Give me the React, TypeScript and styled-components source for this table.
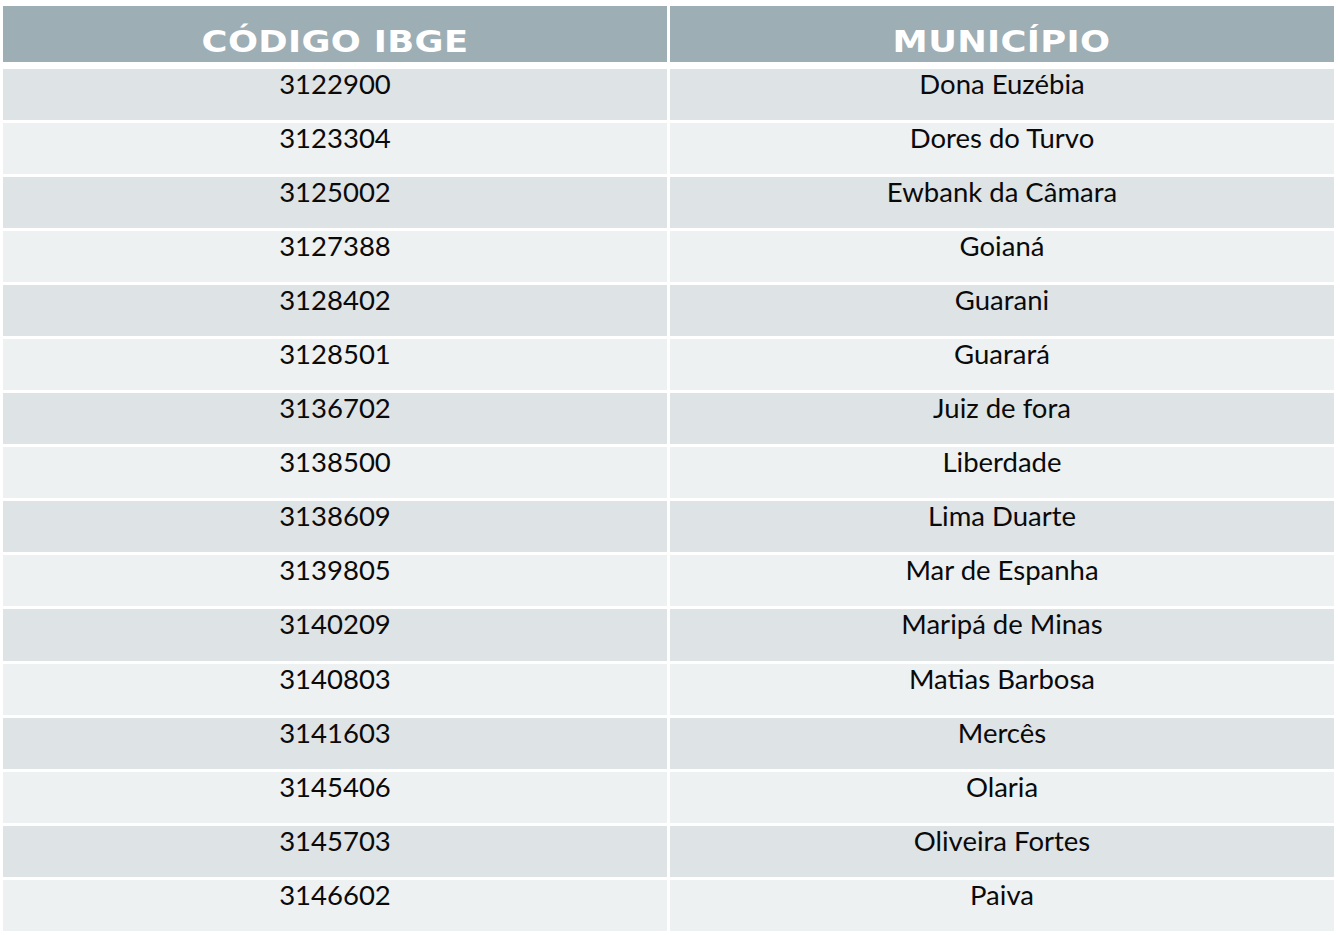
import React from "react";
import styled, { createGlobalStyle } from "styled-components";

const GlobalStyle = createGlobalStyle`
  html, body {
    margin: 0;
    padding: 0;
    background: #ffffff;
  }
  body {
    font-family: Lato, "Open Sans", "Liberation Sans", sans-serif;
  }
`;

const Page = styled.div`
  padding: 6px 0 0 3px;
  width: 1331px;
`;

const Table = styled.div`
  display: flex;
  flex-direction: column;
`;

const HeaderRow = styled.div`
  display: grid;
  grid-template-columns: 1fr 1fr;
  column-gap: 3px;
  height: 56px;
  margin-bottom: 6.5px;
`;

const Body = styled.div`
  display: grid;
  grid-template-columns: 1fr 1fr;
  column-gap: 3px;
  row-gap: 3px;
  grid-auto-rows: 51.1px;
`;

const HeaderCell = styled.div`
  background: #9daeb4;
  color: #ffffff;
  box-sizing: border-box;
  padding-top: 19px;
  display: flex;
  justify-content: center;
  align-items: flex-start;
  overflow: hidden;
`;

const HeaderText = styled.span`
  display: inline-block;
  font-family: "DejaVu Sans", Lato, sans-serif;
  font-weight: 700;
  font-size: 31px;
  line-height: 32px;
  letter-spacing: 0.3px;
  transform: scaleX(1.14);
  transform-origin: center;
  white-space: nowrap;
`;

const Cell = styled.div<{ $odd: boolean }>`
  background: ${(p) => (p.$odd ? "#dee3e6" : "#edf1f2")};
  color: #0a0a0a;
  text-align: center;
  font-family: Lato, "Liberation Sans", sans-serif;
  font-size: 27.5px;
  line-height: 30px;
  box-sizing: border-box;
`;

const rows: [string, string][] = [
  ["3122900", "Dona Euzébia"],
  ["3123304", "Dores do Turvo"],
  ["3125002", "Ewbank da Câmara"],
  ["3127388", "Goianá"],
  ["3128402", "Guarani"],
  ["3128501", "Guarará"],
  ["3136702", "Juiz de fora"],
  ["3138500", "Liberdade"],
  ["3138609", "Lima Duarte"],
  ["3139805", "Mar de Espanha"],
  ["3140209", "Maripá de Minas"],
  ["3140803", "Matias Barbosa"],
  ["3141603", "Mercês"],
  ["3145406", "Olaria"],
  ["3145703", "Oliveira Fortes"],
  ["3146602", "Paiva"],
];

export default function App() {
  return (
    <>
      <GlobalStyle />
      <Page>
        <Table>
          <HeaderRow>
            <HeaderCell>
              <HeaderText>CÓDIGO IBGE</HeaderText>
            </HeaderCell>
            <HeaderCell>
              <HeaderText>MUNICÍPIO</HeaderText>
            </HeaderCell>
          </HeaderRow>
          <Body>
            {rows.map(([code, name], i) => (
              <React.Fragment key={code}>
                <Cell $odd={i % 2 === 0}>{code}</Cell>
                <Cell $odd={i % 2 === 0}>{name}</Cell>
              </React.Fragment>
            ))}
          </Body>
        </Table>
      </Page>
    </>
  );
}
